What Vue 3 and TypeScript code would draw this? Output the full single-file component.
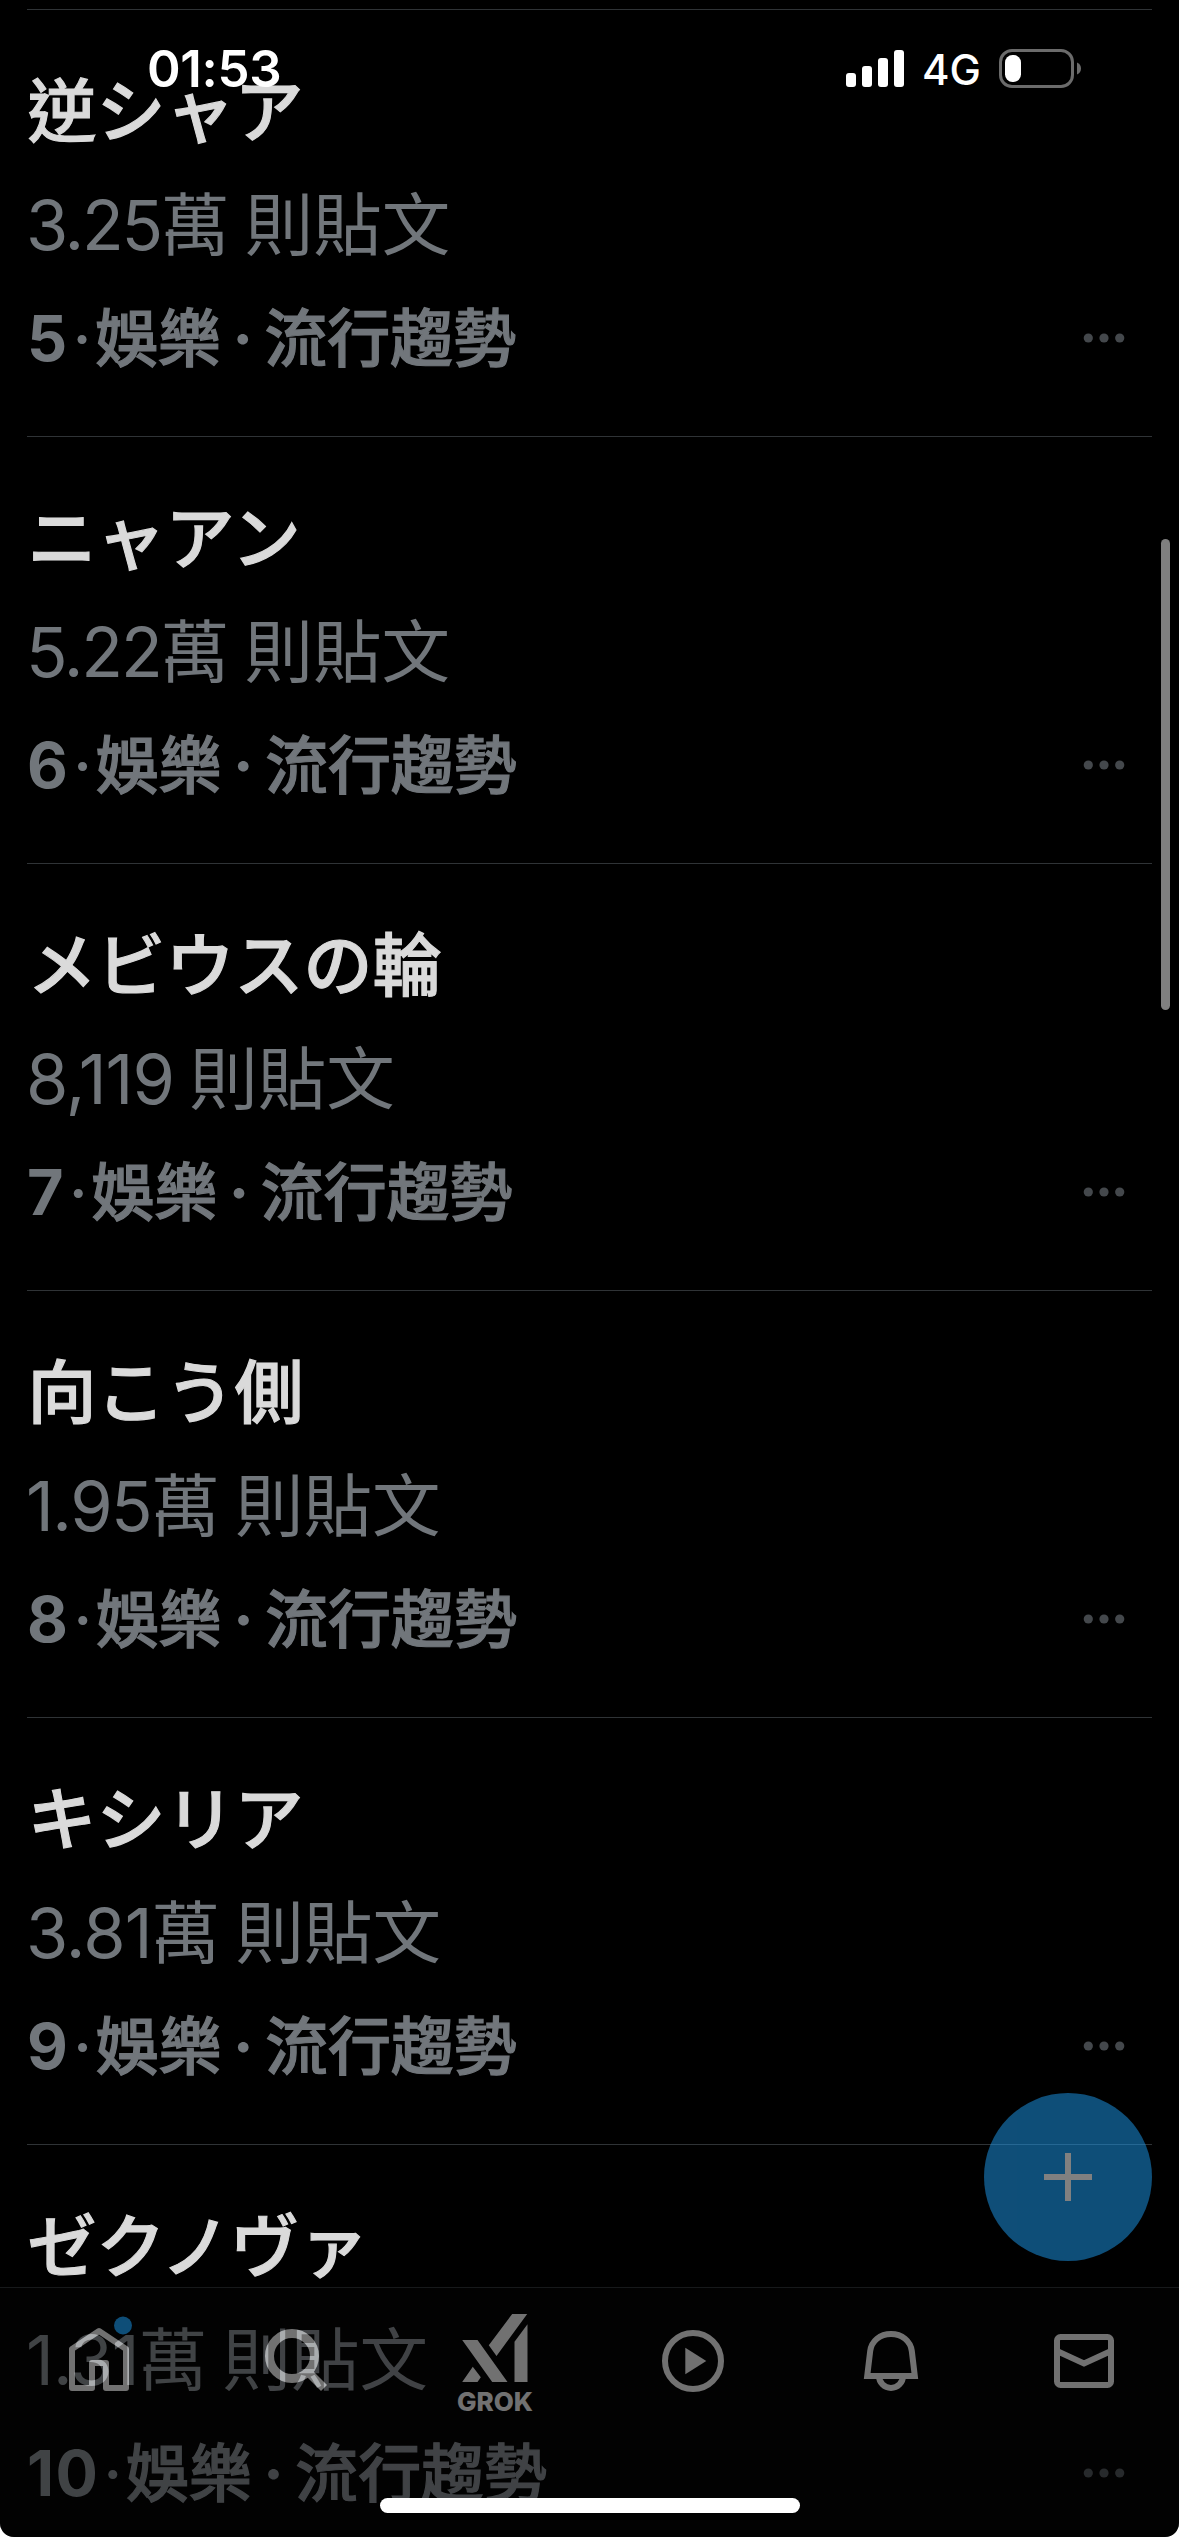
<script setup lang="ts">
interface Trend {
  rank: number
  title: string
  count: string
  unit: string
  tracking: number
}

const trends: Trend[] = [
  { rank: 5, title: '逆シャア', count: '3.25', unit: '萬 則貼文', tracking: -2.25 },
  { rank: 6, title: 'ニャアン', count: '5.22', unit: '萬 則貼文', tracking: -2.1 },
  { rank: 7, title: 'メビウスの輪', count: '8,119', unit: ' 則貼文', tracking: -1 },
  { rank: 8, title: '向こう側', count: '1.95', unit: '萬 則貼文', tracking: -1.5 },
  { rank: 9, title: 'キシリア', count: '3.81', unit: '萬 則貼文', tracking: -0.9 },
  { rank: 10, title: 'ゼクノヴァ', count: '1.31', unit: '萬 則貼文', tracking: -0.8 },
]
</script>

<template>
  <div class="screen">
    <main class="list">
      <article v-for="t in trends" :key="t.rank" class="trend">
        <h2 class="title">{{ t.title }}</h2>
        <p class="stat"><span :style="{ letterSpacing: t.tracking + 'px' }">{{ t.count }}</span>{{ t.unit }}</p>
        <div class="meta">
          <span class="rank">{{ t.rank }}</span>
          <span class="dot small">·</span>
          <span class="label">娛樂</span>
          <span class="dot">·</span>
          <span class="label">流行趨勢</span>
          <svg class="more" width="42" height="10" viewBox="0 0 42 10">
            <circle cx="5.3" cy="5" r="4.6" />
            <circle cx="21" cy="5" r="4.6" />
            <circle cx="36.7" cy="5" r="4.6" />
          </svg>
        </div>
      </article>
    </main>

    <div class="scrollbar"></div>

    <header class="status">
      <span class="time">01:53</span>
      <div class="indicators">
        <svg class="signal" width="58" height="37" viewBox="0 0 58 37">
          <rect x="0" y="23" width="10" height="14" rx="3" />
          <rect x="16" y="16" width="10" height="21" rx="3" />
          <rect x="32" y="8" width="10" height="29" rx="3" />
          <rect x="48" y="0" width="10" height="37" rx="3" />
        </svg>
        <span class="network">4G</span>
        <svg class="battery" width="82" height="39" viewBox="0 0 82 39">
          <rect x="1.5" y="1.5" width="72" height="36" rx="11.5" fill="none" stroke="#6b6b6b" stroke-width="3" />
          <rect x="6" y="6" width="16" height="27" rx="7.5" fill="#fff" />
          <path d="M78 13.5C80.500 14.500 82 16.800 82 19.500S80.500 24.500 78 25.500Z" fill="#6b6b6b" />
        </svg>
      </div>
    </header>

    <button class="compose" aria-label="+">
      <svg width="48" height="48" viewBox="0 0 48 48"><path d="M24 0V48M0 24H48" stroke="#fff" stroke-width="6" /></svg>
    </button>

    <nav class="tabs">
      <div class="tab">
        <svg width="72" height="72" viewBox="0 0 72 72">
          <path d="M9 63V24L36 6L63 24V63H43V38H29V63Z" class="line" stroke-linejoin="round" />
          <circle cx="60" cy="0.5" r="9" fill="#1d9bf0" />
        </svg>
      </div>
      <div class="tab">
        <svg width="72" height="72" viewBox="0 0 72 72">
          <circle cx="31" cy="31" r="22.500" class="line ring" />
          <path d="M47 47L63 63" class="line thick" />
        </svg>
      </div>
      <div class="tab grok">
        <svg width="66" height="68" viewBox="462.500 2314 66 68">
          <path class="solid" d="M512.700 2314H527.700L497 2356L489.300 2345.300ZM462.700 2340H478L508 2382H492.700ZM462.700 2382L473.300 2366.700L481.300 2377.300L478 2382ZM515 2382V2341.700L528 2324.300V2382Z" />
        </svg>
        <span>GROK</span>
      </div>
      <div class="tab">
        <svg width="72" height="72" viewBox="0 0 72 72">
          <circle cx="36" cy="36" r="28" class="line" />
          <path d="M28.300 22.700L49.300 36L28.300 49.300Z" class="solid" />
        </svg>
      </div>
      <div class="tab">
        <svg width="72" height="72" viewBox="0 0 72 72">
          <path d="M12.200 51L15.200 26C16.500 16 25 9 36 9S55.500 16 56.800 26L59.800 51Z" class="line" />
          <path d="M24 51A12 12 0 0 0 48 51" class="line" />
        </svg>
      </div>
      <div class="tab">
        <svg width="72" height="72" viewBox="0 0 72 72">
          <rect x="4" y="12" width="54" height="48" rx="3.500" class="line" />
          <path d="M5 26.500L31 38.500L57 26.500" class="line" />
        </svg>
      </div>
    </nav>

    <div class="home-bar"></div>
  </div>
</template>

<style>
body {
  margin: 0;
  background: #fff;
}
</style>

<style scoped>
.screen {
  position: relative;
  width: 1179px;
  height: 2537px;
  overflow: hidden;
  background: #000;
  border-radius: 0 0 14px 14px;
  font-family: Inter, "Noto Sans CJK TC", sans-serif;
}

.list {
  padding: 9px 27px 0;
}

.trend {
  box-sizing: border-box;
  height: 427px;
  padding-top: 46px;
  border-top: 1px solid #2f3336;
}

.title,
.stat,
.meta {
  margin: 0;
  height: 113px;
  line-height: 113px;
  white-space: pre;
}

.title {
  margin-left: 0.5px;
  font-size: 69px;
  font-weight: 500;
  color: #dadada;
  -webkit-text-stroke: 1.1px #dadada;
}

.stat {
  margin-left: -1px;
  font-size: 68.500px;
  font-weight: 400;
  word-spacing: -4px;
  color: #71767b;
}

.meta {
  display: flex;
  align-items: center;
  font-size: 62.900px;
  font-weight: 700;
  color: #71767b;
}

.rank {
  letter-spacing: 1.5px;
}

.label {
  font-weight: 500;
  -webkit-text-stroke: 1.2px #71767b;
}

.dot {
  width: 43.500px;
  text-align: center;
}

.dot.small {
  width: 26.500px;
  font-weight: 500;
}

.more {
  margin: -2px 27px 0 auto;
  fill: #44484c;
}

.scrollbar {
  position: absolute;
  left: 1161px;
  top: 539px;
  width: 9px;
  height: 471px;
  border-radius: 5px;
  background: #7f7f7f;
}

.status {
  position: absolute;
  left: 0;
  right: 0;
  top: 49px;
  height: 39px;
  display: flex;
  align-items: center;
  justify-content: space-between;
  padding: 0 98px 0 147px;
  color: #fff;
}

.time {
  font-size: 51px;
  font-weight: 600;
  line-height: 39px;
  letter-spacing: -0.3px;
}

.indicators {
  display: flex;
  align-items: center;
}

.signal {
  fill: #fff;
}

.network {
  margin: 2px 18px 0 18px;
  font-size: 42px;
  font-weight: 500;
  line-height: 39px;
}

.compose {
  position: absolute;
  left: 984px;
  top: 2093px;
  width: 168px;
  height: 168px;
  padding: 0;
  border: 0;
  border-radius: 50%;
  display: flex;
  align-items: center;
  justify-content: center;
  background: #1d9bf0;
  opacity: 0.5;
}

.tabs {
  position: absolute;
  left: 0;
  right: 0;
  top: 2287px;
  height: 250px;
  box-sizing: border-box;
  padding: 37px 0 0;
  display: flex;
  align-items: flex-start;
  border-top: 1px solid #2f3336;
  background: rgba(6, 6, 6, 0.9);
  opacity: 0.5;
}

.tab {
  flex: none;
  width: 198px;
  display: flex;
  flex-direction: column;
  align-items: center;
}

.tab svg {
  overflow: visible;
}

.line {
  fill: none;
  stroke: #e2e2e2;
  stroke-width: 6;
}

.ring {
  stroke-width: 9;
}

.thick {
  stroke-width: 8.500;
}

.solid {
  fill: #e2e2e2;
}

.grok {
  margin-top: -11px;
}

.grok span {
  margin-top: 4px;
  font-size: 26px;
  font-weight: 800;
  line-height: 31px;
  color: #e2e2e2;
}

.home-bar {
  position: absolute;
  left: 380px;
  top: 2498px;
  width: 420px;
  height: 15px;
  border-radius: 8px;
  background: #fff;
}
</style>
